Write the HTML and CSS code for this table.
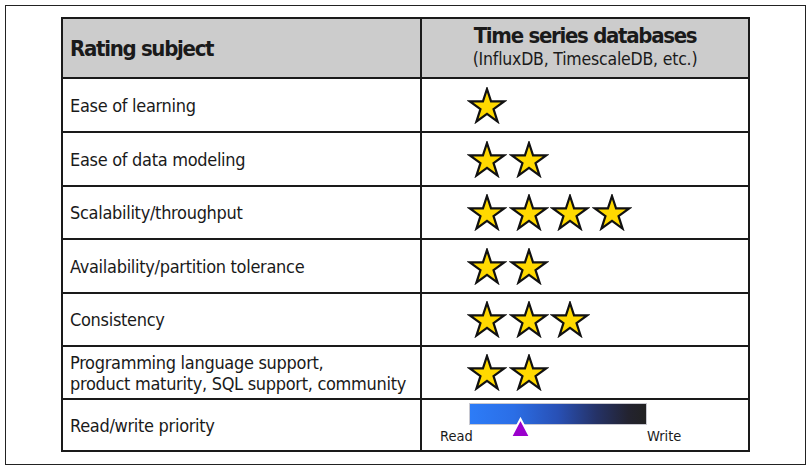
FILE: index.html
```html
<!DOCTYPE html>
<html>
<head>
<meta charset="utf-8">
<link rel="stylesheet" href="styles.css">
</head>
<body>
<svg width="0" height="0" class="defs">
  <defs>
    <symbol id="star" viewBox="0 0 40 37">
      <path d="M20 2 L24.04 14.43 L37.12 14.44 L26.54 22.13 L30.58 34.56 L20 26.88 L9.42 34.56 L13.46 22.13 L2.88 14.44 L15.96 14.43 Z" fill="#ffd900" stroke="#111" stroke-width="2.2" stroke-linejoin="miter"/>
    </symbol>
  </defs>
</svg>
<div class="frame">
  <div class="ratings">
    <div class="cell head subject-head">Rating subject</div>
    <div class="cell head db-head">
      <div class="db-title">Time series databases</div>
      <div class="db-sub">(InfluxDB, TimescaleDB, etc.)</div>
    </div>

    <div class="cell subject">Ease of learning</div>
    <div class="cell stars">
      <svg class="star"><use href="#star"/></svg>
    </div>

    <div class="cell subject">Ease of data modeling</div>
    <div class="cell stars">
      <svg class="star"><use href="#star"/></svg>
      <svg class="star"><use href="#star"/></svg>
    </div>

    <div class="cell subject">Scalability/throughput</div>
    <div class="cell stars">
      <svg class="star"><use href="#star"/></svg>
      <svg class="star"><use href="#star"/></svg>
      <svg class="star"><use href="#star"/></svg>
      <svg class="star"><use href="#star"/></svg>
    </div>

    <div class="cell subject">Availability/partition tolerance</div>
    <div class="cell stars">
      <svg class="star"><use href="#star"/></svg>
      <svg class="star"><use href="#star"/></svg>
    </div>

    <div class="cell subject">Consistency</div>
    <div class="cell stars">
      <svg class="star"><use href="#star"/></svg>
      <svg class="star"><use href="#star"/></svg>
      <svg class="star"><use href="#star"/></svg>
    </div>

    <div class="cell subject">Programming language support,<br>product maturity, SQL support, community</div>
    <div class="cell stars">
      <svg class="star"><use href="#star"/></svg>
      <svg class="star"><use href="#star"/></svg>
    </div>

    <div class="cell subject">Read/write priority</div>
    <div class="cell priority">
      <div class="bar"></div>
      <div class="labels"><span>Read</span><span>Write</span></div>
      <svg class="marker" width="23" height="22" viewBox="0 0 23 22">
        <polygon points="11.5,2 21,20 2,20" fill="#9a00cc" stroke="#fff" stroke-width="2"/>
      </svg>
    </div>
  </div>
</div>
</body>
</html>
```

FILE: styles.css
```css
html, body {
  margin: 0;
  padding: 0;
  background: #fff;
}

.defs {
  position: absolute;
}

.frame {
  margin: 5px;
  width: 744px;
  height: 447px;
  border: 1px solid #222;
  padding: 11px 0 0 55px;
  box-sizing: content-box;
}

.ratings {
  display: grid;
  grid-template-columns: 359px 328px;
  grid-template-rows: 60px 54px 54px 53px 54px 53px 53px 52px;
  border-top: 2px solid #1a1a1a;
  border-left: 2px solid #1a1a1a;
  width: 687px;
  font-family: "DejaVu Sans Condensed", "DejaVu Sans", sans-serif;
  color: #1a1a1a;
}

.cell {
  box-sizing: border-box;
  border-right: 2px solid #1a1a1a;
  border-bottom: 2px solid #1a1a1a;
  display: flex;
}

.head {
  background: #cccccc;
}

.subject-head {
  align-items: center;
  padding-left: 7px;
  font-weight: bold;
  font-size: 22px;
  letter-spacing: -1.3px;
}

.db-head {
  flex-direction: column;
  align-items: center;
  justify-content: center;
  padding-bottom: 2px;
}

.db-title {
  font-weight: bold;
  font-size: 22px;
  line-height: 24px;
  letter-spacing: -1.3px;
}

.db-sub {
  font-size: 17.5px;
  line-height: 22px;
  letter-spacing: -0.2px;
}

.subject {
  align-items: center;
  padding-left: 7px;
  font-size: 18px;
  line-height: 21px;
  letter-spacing: -0.3px;
}

.stars {
  align-items: center;
  padding-left: 45px;
  gap: 1.5px;
}

.star {
  width: 40px;
  height: 37px;
}

.priority {
  position: relative;
  flex-direction: column;
  padding: 3px 0 0 18px;
}

.bar {
  margin-left: 29px;
  width: 178px;
  height: 22px;
  box-sizing: border-box;
  border: 1px solid #c8c8d0;
  background: linear-gradient(to right, #2d7cf7 0%, #2b6ee6 25%, #2850b5 50%, #253266 72%, #232330 90%, #222222 100%);
}

.labels {
  display: grid;
  grid-template-columns: 207px auto;
  font-size: 14.5px;
  line-height: 20px;
  margin-top: 1px;
}

.marker {
  position: absolute;
  left: 87px;
  top: 17px;
}
```
